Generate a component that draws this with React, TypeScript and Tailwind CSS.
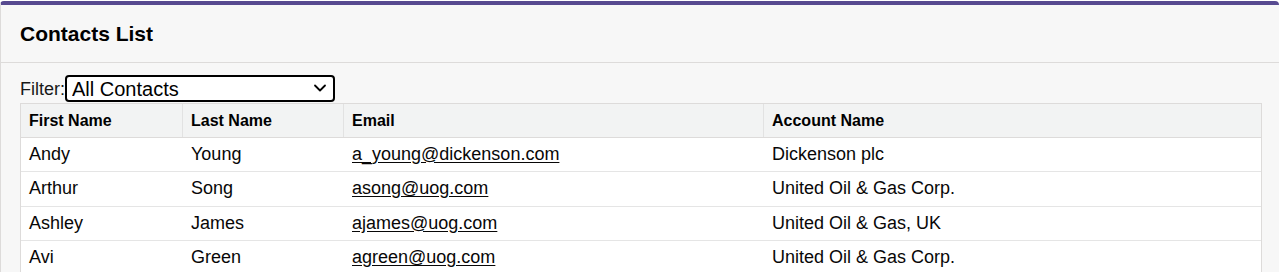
import { ChevronDown } from "lucide-react";

type Contact = {
  firstName: string;
  lastName: string;
  email: string;
  account: string;
};

const contacts: Contact[] = [
  { firstName: "Andy", lastName: "Young", email: "a_young@dickenson.com", account: "Dickenson plc" },
  { firstName: "Arthur", lastName: "Song", email: "asong@uog.com", account: "United Oil & Gas Corp." },
  { firstName: "Ashley", lastName: "James", email: "ajames@uog.com", account: "United Oil & Gas, UK" },
  { firstName: "Avi", lastName: "Green", email: "agreen@uog.com", account: "United Oil & Gas Corp." }
];

// fixed column tracks shared by the header and the rows
const cols = "grid grid-cols-[162px_161px_420px_1fr]";

export default function App() {
  return (
    <div className="h-[272px] overflow-hidden bg-white pt-px font-['Liberation_Sans',Arial,sans-serif] text-[#080707]">
      <section className="min-h-[271px] rounded-t-[4px] border-t-4 border-l border-[#dddbda] border-t-[#574a90] bg-[#f7f7f7]">
        <header className="flex h-[58px] items-center border-b border-[#dddbda] pl-[19px] pr-5">
          <h1 className="text-[21px] font-bold leading-none text-black">Contacts List</h1>
        </header>

        <div className="pl-[19px] pr-[17px] pt-3">
          <div className="flex items-center">
            <label htmlFor="filter" className="text-[18px] leading-none text-[#181818]">
              Filter:
            </label>
            <div className="relative">
              <select
                id="filter"
                defaultValue="all"
                className="h-[27px] w-[270px] appearance-none rounded-[4px] border-2 border-black bg-white pl-[5px] text-[20px] leading-none text-black outline-none"
              >
                <option value="all">All Contacts</option>
                <option value="mine">My Contacts</option>
                <option value="recent">Recently Viewed</option>
              </select>
              <ChevronDown
                aria-hidden="true"
                size={20}
                strokeWidth={2.2}
                className="pointer-events-none absolute right-[5px] top-[3px] text-black"
              />
            </div>
          </div>

          <div className="border border-[#dddbda] bg-white text-[18px]">
            <div className={`${cols} h-[34px] border-b border-[#dddbda] bg-[#f2f3f3] text-[16px] font-bold text-black`}>
              {["First Name", "Last Name", "Email", "Account Name"].map((label, i) => (
                <div
                  key={label}
                  className={`flex items-center px-2 pt-px ${i < 3 ? "border-r border-[#e2e2e2]" : ""}`}
                >
                  {label}
                </div>
              ))}
            </div>
            {contacts.map((c) => (
              <div key={c.email} className={`${cols} h-[34.5px] border-b border-[#e5e5e5]`}>
                <div className="flex items-center px-2">{c.firstName}</div>
                <div className="flex items-center px-2">{c.lastName}</div>
                <div className="flex items-center px-2">
                  <a href={`mailto:${c.email}`} className="text-[#080707] underline underline-offset-2">
                    {c.email}
                  </a>
                </div>
                <div className="flex items-center px-2">{c.account}</div>
              </div>
            ))}
          </div>
        </div>
      </section>
    </div>
  );
}
